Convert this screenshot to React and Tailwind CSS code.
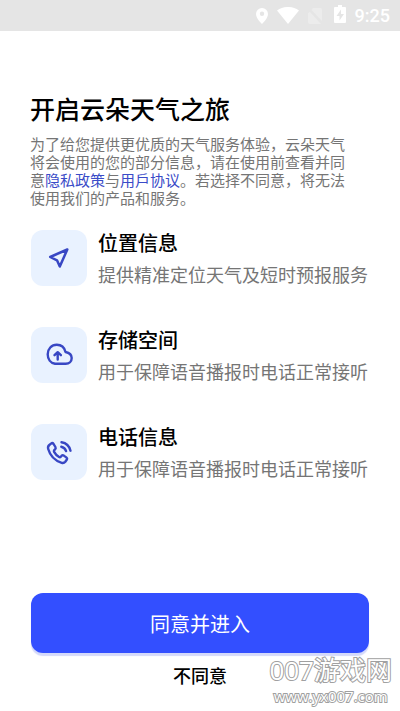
import React from "react";

function StatusBar() {
  return (
    <header className="flex h-[31px] items-center justify-end bg-[#e5e5e5] pr-[10px] text-white">
      <svg className="mr-[9px] h-4 w-3" viewBox="0 0 12 16" fill="currentColor" aria-hidden="true">
        <path fillRule="evenodd" d="M6 0a6 6 0 0 0-6 6c0 4.500 6 10 6 10s6-5.500 6-10a6 6 0 0 0-6-6Zm0 8a2.200 2.200 0 1 1 0-4.400A2.200 2.200 0 0 1 6 8Z" />
      </svg>
      <svg className="mr-[9px] h-[17px] w-[22px]" viewBox="0 0 22 17" fill="currentColor" aria-hidden="true">
        <path d="M0 3.500C6.500-1.200 15.500-1.200 22 3.500L11 17Z" />
      </svg>
      <svg className="mr-[12px] h-4 w-[14px] text-[#ececec]" viewBox="0 0 14 16" fill="currentColor" aria-hidden="true">
        <path d="M5 0h7.500q1.500 0 1.500 1.500V13L3.500 2ZM2 4l11 12H2Q0 16 0 14V5Z" />
      </svg>
      <svg className="mr-[9px] mb-1 h-[18px] w-3" viewBox="0 0 12 18" fill="currentColor" aria-hidden="true">
        <path fillRule="evenodd" d="M4 0h4v2h3q1 0 1 1v14q0 1-1 1H1q-1 0-1-1V3q0-1 1-1h3ZM7 4.500 2.500 11H5.500v4.500L10 9H7Z" />
      </svg>
      <span className="pt-px font-[Roboto,sans-serif] text-lg font-medium leading-5">9:25</span>
    </header>
  );
}

function LocationIcon() {
  return (
    <svg className="size-7" viewBox="0 0 28 28" fill="none" stroke="currentColor" strokeWidth="2.500" strokeLinejoin="round" aria-hidden="true">
      <path d="M22.300 5.500 5.200 13 12 16.300 14.800 22.500Z" />
    </svg>
  );
}

function CloudIcon() {
  return (
    <svg className="size-7" viewBox="0 0 28 28" fill="none" stroke="currentColor" strokeWidth="2.400" strokeLinecap="round" strokeLinejoin="round" aria-hidden="true">
      <path d="M10 22.800C5.500 22 2.700 18 2.700 13.300 2.700 7.800 6.500 3.800 11.800 3.800c4.600 0 7.600 2.800 8.700 7.200 3.700.7 6.200 3 6.200 6.100 0 3.300-2.500 5.700-6 5.700Z" />
      <path d="M12.700 18.500v-6M9.500 14.200 12.700 11.200l3.200 3" />
    </svg>
  );
}

function PhoneIcon() {
  return (
    <svg className="size-7" viewBox="0 0 28 28" fill="none" stroke="currentColor" strokeWidth="2.400" strokeLinecap="round" strokeLinejoin="round" aria-hidden="true">
      <path d="M4.300 7 6 5.600Q7.500 4.500 8.600 6l1.800 3q.7 1.300-.3 2.300l-.9.900q-.6.800-.1 1.600 1.900 3.400 5 5.200.9.500 1.600-.2l1-1.100q.9-.9 2.100-.1l2.500 1.800q1.300 1 .4 2.300l-1.400 2q-1.400 1.700-3.600 1.100Q6.200 21.500 3.200 11 2.500 8.500 4.300 7Z" />
      <path d="M16.300 8.700q3.600.7 4.800 4.400M16.500 4.300q7.200 1.200 9 8.400" />
    </svg>
  );
}

const permissions = [
  { title: "位置信息", text: "提供精准定位天气及短时预报服务", Icon: LocationIcon },
  { title: "存储空间", text: "用于保障语音播报时电话正常接听", Icon: CloudIcon },
  { title: "电话信息", text: "用于保障语音播报时电话正常接听", Icon: PhoneIcon },
];

export default function App() {
  return (
    <div className="relative flex min-h-screen flex-col bg-white font-['Noto_Sans_CJK_SC',sans-serif] text-black">
      <StatusBar />
      <main className="flex grow flex-col pt-[59px]">
        <div className="px-[30px]">
          <h1 className="text-[25px] font-medium leading-9">开启云朵天气之旅</h1>
          <p className="mt-[9px] pr-5 text-[15px] leading-[18px] text-[#757575]">
            为了给您提供更优质的天气服务体验，云朵天气将会使用的您的部分信息，请在使用前查看并同意
            <a href="#privacy" className="inline-block text-[#3a4bc8]">隐私政策</a>与
            <a href="#agreement" className="inline-block text-[#3a4bc8]">用戶协议</a>。若选择不同意，将无法使用我们的产品和服务。
          </p>
        </div>
        <ul className="mt-[23px] flex flex-col gap-[41px] px-[31px]">
          {permissions.map(({ title, text, Icon }) => (
            <li key={title} className="flex h-14 items-center gap-[11px]">
              <span className="flex size-14 shrink-0 items-center justify-center rounded-xl bg-[#e9f2ff] text-[#3847c4]">
                <Icon />
              </span>
              <div className="whitespace-nowrap">
                <h2 className="text-xl font-medium leading-8">{title}</h2>
                <p className="text-lg leading-[30px] text-[#757575]">{text}</p>
              </div>
            </li>
          ))}
        </ul>
        <div className="mt-auto flex flex-col items-center px-[31px] pb-[22px]">
          <button type="button" className="h-[60px] w-full rounded-xl bg-[#334fff] pt-px text-xl text-white shadow-[0_3px_1px_#d4d9fa]">
            同意并进入
          </button>
          <button type="button" className="mt-2 text-lg font-medium leading-7">不同意</button>
        </div>
      </main>
      <div className="pointer-events-none absolute right-2 bottom-0 flex flex-col items-center pb-1 text-white [-webkit-text-stroke:2px_#a0a0a0] [paint-order:stroke_fill]">
        <span className="font-['Open_Sans','Noto_Sans_CJK_SC',sans-serif] text-[26px] leading-[30px]">007游戏网</span>
        <span className="font-['Open_Sans',sans-serif] text-[15px] leading-[22px]">www.yx007.com</span>
      </div>
    </div>
  );
}
